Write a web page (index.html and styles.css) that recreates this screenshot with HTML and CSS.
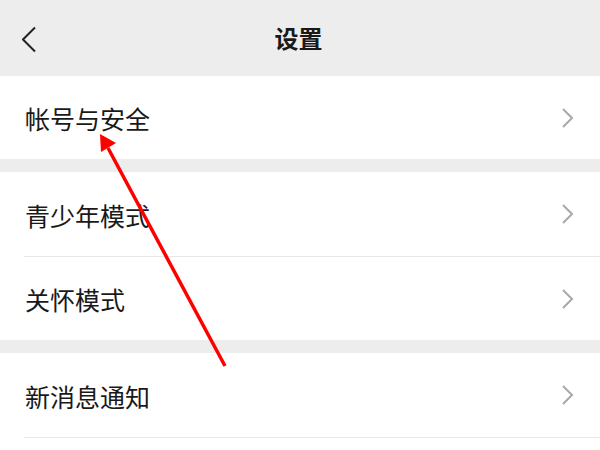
FILE: index.html
```html
<!DOCTYPE html>
<html lang="zh-CN">
<head>
<meta charset="utf-8">
<link rel="stylesheet" href="styles.css">
</head>
<body>
<div class="page">
  <header class="topbar">
    <svg class="back" width="16" height="28" viewBox="0 0 16 28"><polyline points="13,1.5 1,13.5 13,25.5" fill="none" stroke="#222" stroke-width="2"/></svg>
    <h1 class="title">设置</h1>
  </header>
  <section class="group">
    <div class="row"><span class="label">帐号与安全</span><svg class="chev" width="13" height="20" viewBox="0 0 13 20"><polyline points="2,1 11,10 2,19" fill="none" stroke="#a8a8a8" stroke-width="2"/></svg></div>
  </section>
  <section class="group">
    <div class="row"><span class="label">青少年模式</span><svg class="chev" width="13" height="20" viewBox="0 0 13 20"><polyline points="2,1 11,10 2,19" fill="none" stroke="#a8a8a8" stroke-width="2"/></svg></div>
    <div class="row"><span class="label">关怀模式</span><svg class="chev" width="13" height="20" viewBox="0 0 13 20"><polyline points="2,1 11,10 2,19" fill="none" stroke="#a8a8a8" stroke-width="2"/></svg></div>
  </section>
  <section class="group group-last">
    <div class="row"><span class="label">新消息通知</span><svg class="chev" width="13" height="20" viewBox="0 0 13 20"><polyline points="2,1 11,10 2,19" fill="none" stroke="#a8a8a8" stroke-width="2"/></svg></div>
    <div class="row row-tail"></div>
  </section>
  <svg class="arrow" width="600" height="450" viewBox="0 0 600 450">
    <line x1="225" y1="366" x2="108" y2="148" stroke="#ff0000" stroke-width="3.5"/>
    <polygon points="100,134 101,152 116,143" fill="#ff0000"/>
  </svg>
</div>
</body>
</html>
```
FILE: styles.css
```css
html, body {
  margin: 0;
  padding: 0;
}
body {
  background: #ededed;
  font-family: "Noto Sans CJK SC", "Noto Sans", sans-serif;
  color: #191919;
  width: 600px;
  height: 450px;
  overflow: hidden;
}
.page {
  position: relative;
  width: 600px;
  height: 450px;
  overflow: hidden;
}
.topbar {
  height: 76px;
  display: flex;
  align-items: center;
  justify-content: center;
  position: relative;
  background: #ededed;
}
.back {
  position: absolute;
  left: 22px;
  top: 26px;
}
.title {
  margin: 0;
  font-size: 24px;
  font-weight: 700;
  color: #191919;
  line-height: 1;
  margin-left: -3px;
}
.group {
  background: #fff;
  margin-bottom: 13px;
  padding-left: 24px;
}
.row {
  height: 84px;
  display: flex;
  align-items: center;
  justify-content: space-between;
  padding-right: 26px;
  border-bottom: 1px solid #e8e8e8;
}
.group .row:last-child {
  height: 83px;
  border-bottom: none;
}
.row-tail {
  height: 12px;
}
.group .row-tail:last-child {
  height: 12px;
}
.label {
  font-size: 25px;
  line-height: 1;
  padding-left: 1px;
  padding-top: 2px;
}
.chev {
  display: block;
}
.arrow {
  position: absolute;
  left: 0;
  top: 0;
  pointer-events: none;
}
```
